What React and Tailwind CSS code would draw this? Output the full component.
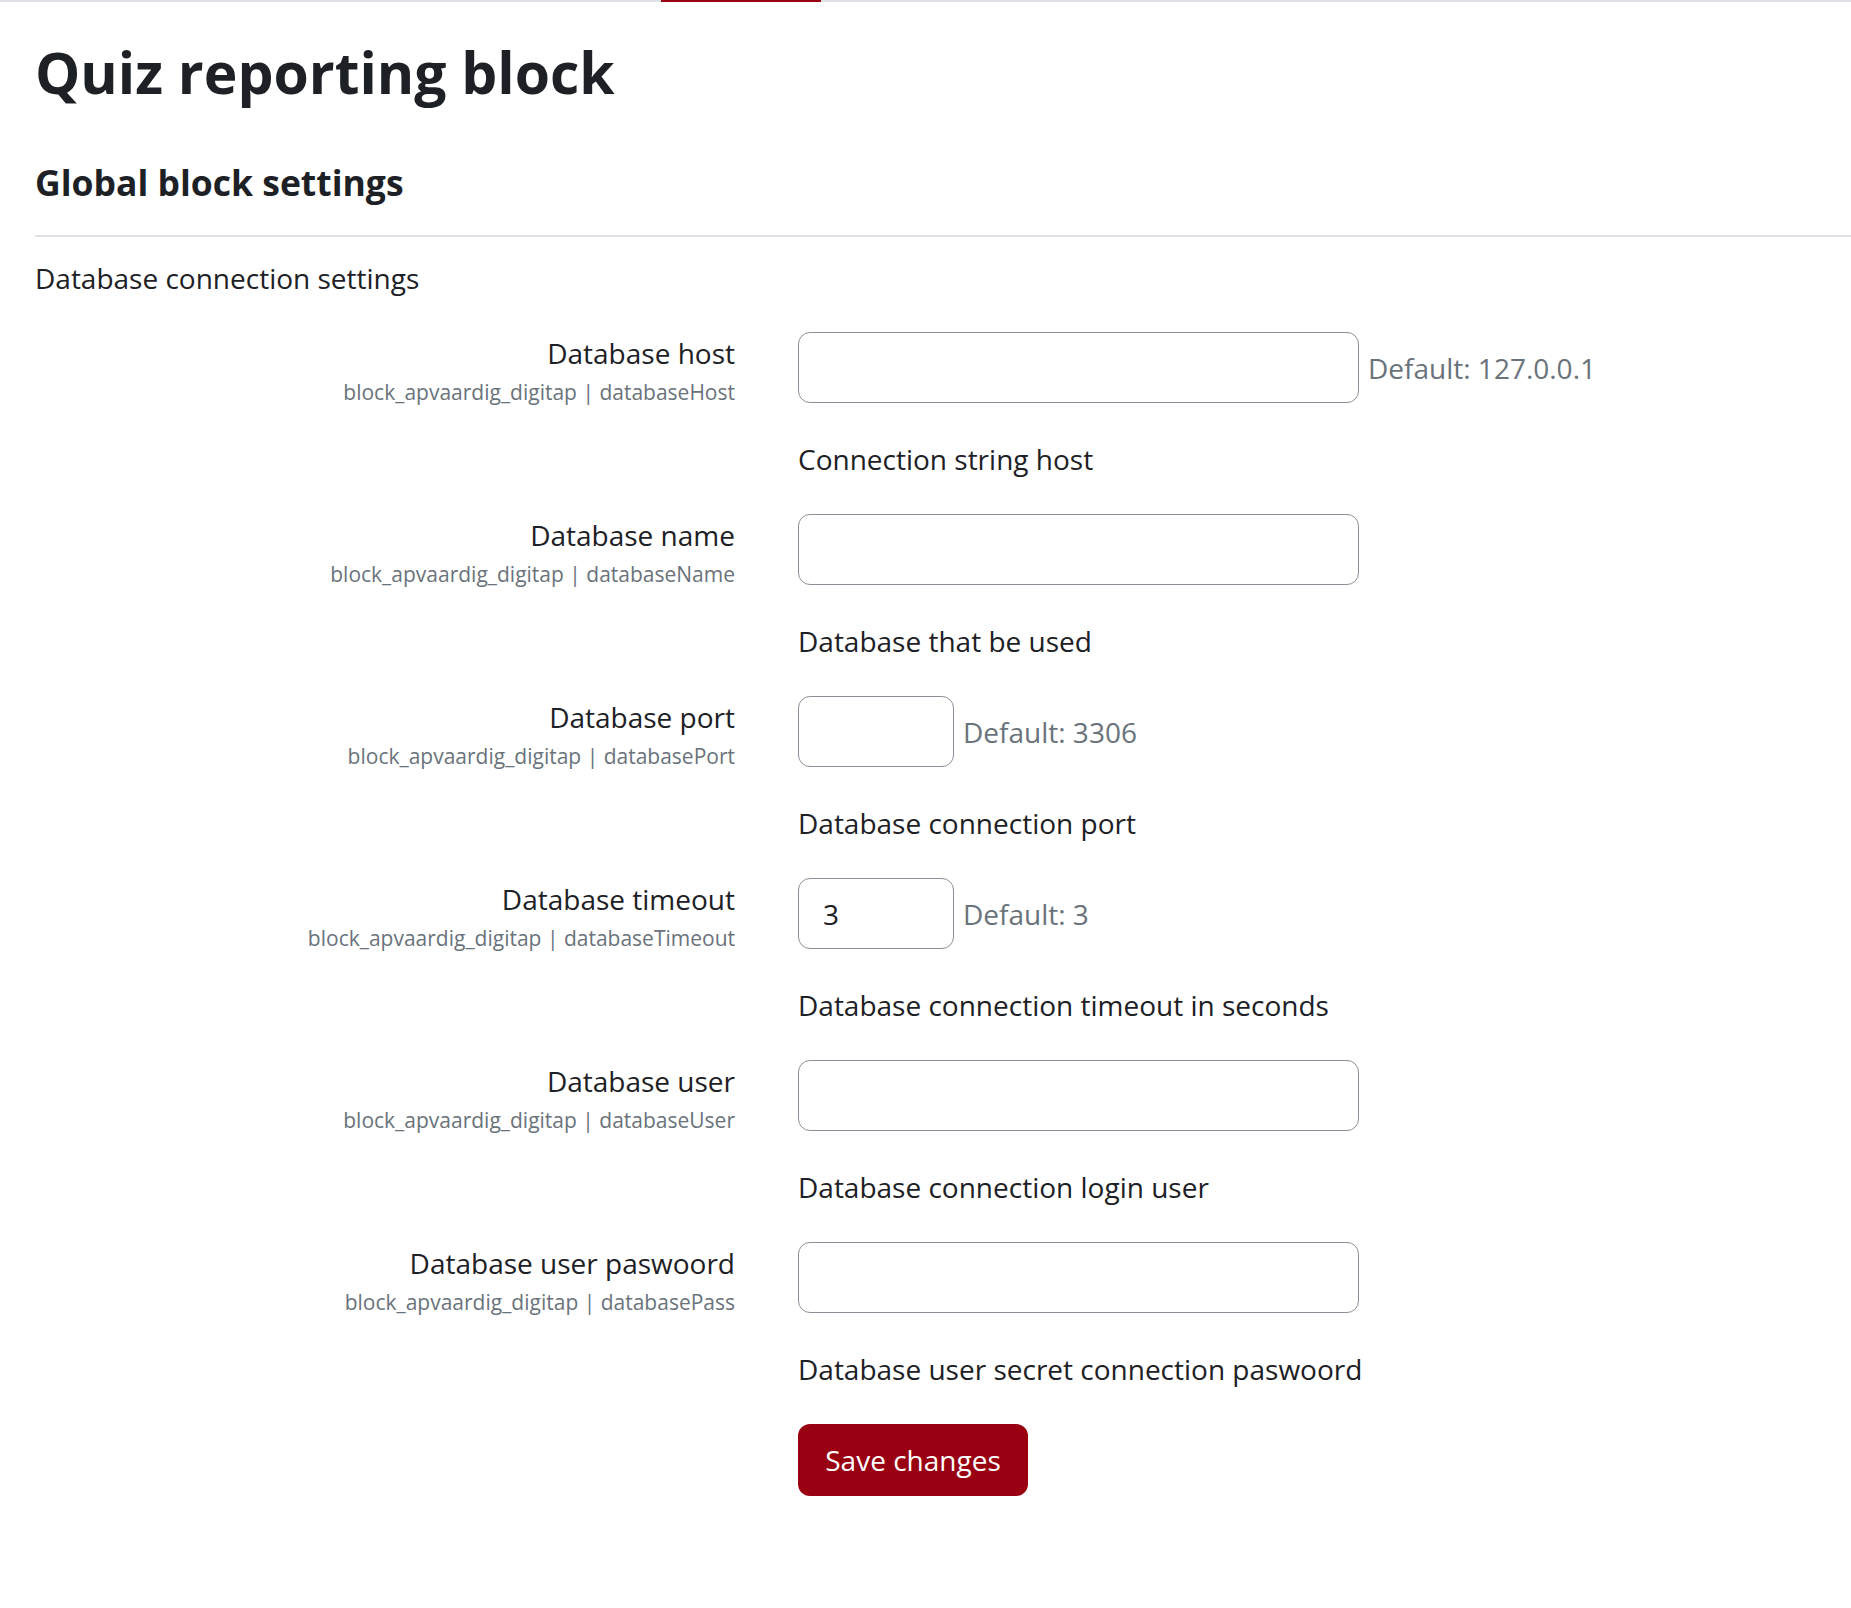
import React from 'react';

const settings = [
  { label: 'Database host', key: 'databaseHost', size: 'wide', value: '', def: 'Default: 127.0.0.1', desc: 'Connection string host' },
  { label: 'Database name', key: 'databaseName', size: 'wide', value: '', def: null, desc: 'Database that be used' },
  { label: 'Database port', key: 'databasePort', size: 'small', value: '', def: 'Default: 3306', desc: 'Database connection port' },
  { label: 'Database timeout', key: 'databaseTimeout', size: 'small', value: '3', def: 'Default: 3', desc: 'Database connection timeout in seconds' },
  { label: 'Database user', key: 'databaseUser', size: 'wide', value: '', def: null, desc: 'Database connection login user' },
  { label: 'Database user paswoord', key: 'databasePass', size: 'wide', value: '', def: null, desc: 'Database user secret connection paswoord' },
];

function SettingRow({ item }) {
  return (
    <div className="grid grid-cols-[700px_1fr] gap-x-[63px]">
      <div className="text-right">
        <div className="text-[28px] leading-[42px] text-[#1d2125]">{item.label}</div>
        <div className="text-[21px] leading-[36px] text-[#6a737b]">block_apvaardig_digitap | {item.key}</div>
      </div>
      <div>
        <div className="flex items-center gap-[9px]">
          <input
            type="text"
            defaultValue={item.value}
            className={
              (item.size === 'wide' ? 'w-[561px] ' : 'w-[156px] ') +
              'h-[71px] rounded-[12px] border-[1.5px] border-[#8a9099] px-[24px] text-[28px] text-[#1d2125] outline-none'
            }
          />
          {item.def && <span className="text-[28px] text-[#6a737b]">{item.def}</span>}
        </div>
        <div className="mt-[35px] text-[28px] leading-[42px] text-[#1d2125]">{item.desc}</div>
      </div>
    </div>
  );
}

export default function App() {
  return (
    <div className="min-h-[1608px] bg-white font-['Open_Sans',sans-serif] text-[#1d2125]">
      <div className="relative h-[2px] bg-[#dee2e6]">
        <div className="absolute left-[661px] top-0 h-[2px] w-[160px] bg-[#990011]" />
      </div>
      <div className="pl-[35px]">
        <h1 className="mt-[37px] text-[57px] font-bold leading-[66px]">Quiz reporting block</h1>
        <h3 className="mt-[55px] text-[35.5px] font-bold leading-[44px]">Global block settings</h3>
        <hr className="mt-[31px] border-t-2 border-[#dee2e6]" />
        <div className="mt-[20px] text-[28px] leading-[42px]">Database connection settings</div>
        <div className="mt-[33px] flex flex-col gap-[34px]">
          {settings.map((s) => (
            <SettingRow key={s.key} item={s} />
          ))}
        </div>
        <div className="mt-[34px] pl-[763px]">
          <button className="h-[72px] w-[230px] rounded-[12px] bg-[#990011] text-[28px] text-white">Save changes</button>
        </div>
      </div>
    </div>
  );
}
